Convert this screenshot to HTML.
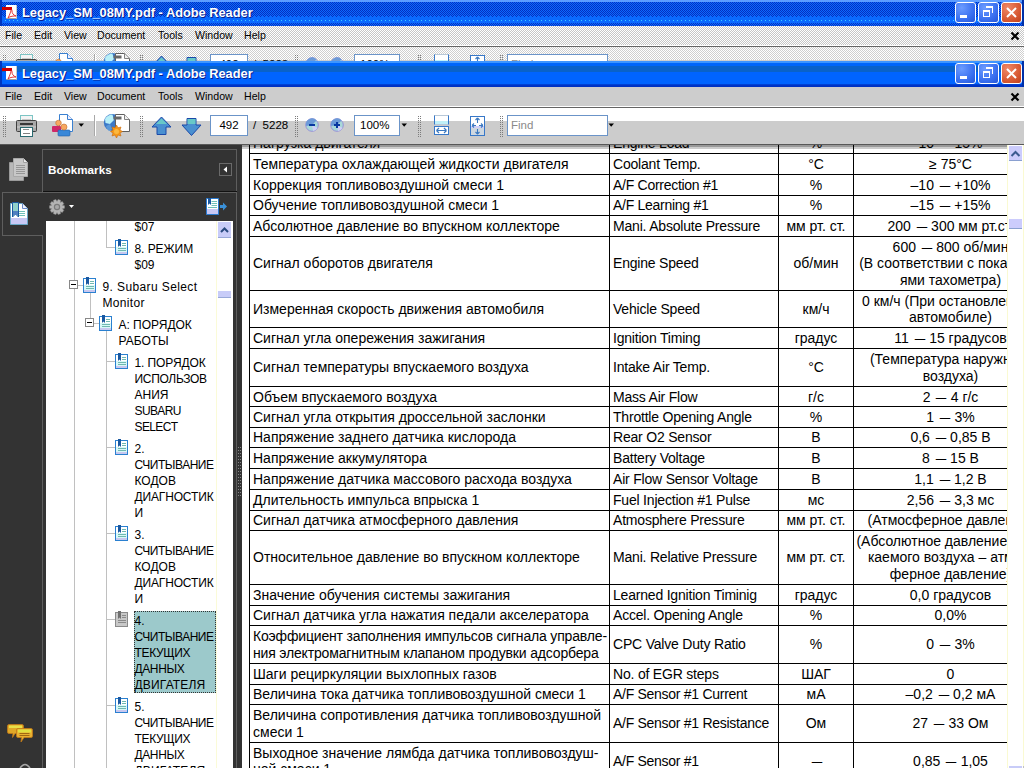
<!DOCTYPE html><html><head><meta charset="utf-8"><style>
*{margin:0;padding:0;box-sizing:border-box}
html,body{width:1024px;height:768px;overflow:hidden;background:#333;font-family:"Liberation Sans",sans-serif}
.abs{position:absolute}
.dith{background-image:repeating-conic-gradient(var(--c1) 0 25%, var(--c2) 0 50%);background-size:2px 2px}
.tb{font-weight:bold;color:#fff;font-size:12.8px;text-shadow:1px 1px 0 #0a1f8c}
.menu span{position:absolute;top:0;font-size:10.6px;color:#000}
.cell{position:absolute;display:flex;align-items:center;font-size:14px;line-height:16.5px;color:#000;white-space:nowrap;overflow:hidden}
.c1{justify-content:flex-start}
.cc{justify-content:center;text-align:center}
.hl{position:absolute;height:1px;background:#000}
.vl{position:absolute;width:1px;background:#000}
.tree{position:absolute;font-size:12px;line-height:16px;color:#000;white-space:nowrap}
.d{display:inline-block;width:10.5px;margin-right:2px;transform:scaleX(1.35);transform-origin:0 0}
.gl{position:absolute;background:#c0c0c0}
</style></head><body><div class="abs" style="left:0;top:0;width:1024px;height:61px;overflow:hidden">
<div class="abs" style="left:0;top:0px;width:1024px;height:26px;background:linear-gradient(#3d95ff 0,#3d95ff 2px,#0066fa 2px,#0066fa 5px,#0a62c8 5px,#0a62c8 11px,#0064ff 11px,#0064ff 23px,#0050e0 23px,#0034c8 24px,#0030c0 26px)"></div>
<div class="abs" style="left:0;top:0px;width:2px;height:26px;background:#0036c0"></div>
<div class="abs" style="left:1022px;top:0px;width:2px;height:26px;background:#0030a8"></div>
<svg class="abs" style="left:0;top:0" width="1024" height="26" shape-rendering="crispEdges"><defs><pattern id="pd" width="2" height="2" patternUnits="userSpaceOnUse"><rect width="2" height="2" fill="#0a6aff"/><rect width="1" height="1" fill="#0630c0"/><rect x="1" y="1" width="1" height="1" fill="#0630c0"/></pattern><pattern id="ps" width="4" height="4" patternUnits="userSpaceOnUse"><rect width="4" height="4" fill="#0a6aff"/><rect width="1" height="1" fill="#0630c0"/></pattern><pattern id="pc" width="4" height="1" patternUnits="userSpaceOnUse"><rect width="4" height="1" fill="#0a6aff"/><rect x="1" width="1" height="1" fill="#40c8ff"/></pattern></defs><rect width="1024" height="2" fill="#5c9cff"/><rect y="2" width="1024" height="14" fill="url(#pd)"/><rect y="16" width="1024" height="7" fill="url(#ps)"/><rect y="20" width="1024" height="1" fill="url(#pc)"/><rect y="23" width="1024" height="3" fill="url(#pd)"/><rect width="2" height="26" fill="#0036c0"/><rect x="1022" width="2" height="26" fill="#0030a8"/></svg>
<div class="abs" style="left:6px;top:5px;width:11px;height:14px;background:#fff;border-right:1px solid #c8c8c8;border-bottom:1px solid #a0a0a0"></div>
<div class="abs" style="left:2px;top:7px;width:10px;height:3px;background:#d00000"></div>
<svg class="abs" style="left:6px;top:8px" width="11" height="11" viewBox="0 0 11 11"><path d="M2 10 C4 6 5 3 5 2 C5 1 6 1 6 3 C6 5 7 7 10 8 C8 8 4 8 2 10Z" fill="none" stroke="#e02020" stroke-width="0.9"/></svg>
<div class="abs tb" style="left:22px;top:5px;line-height:16px">Legacy_SM_08MY.pdf - Adobe Reader</div>
<div class="abs" style="left:955px;top:2px;width:21px;height:21px;border:1px solid #fff;border-radius:3px;background:radial-gradient(circle at 30% 25%, #6c9cff, #3a70f0 60%, #2456d8)"></div>
<div class="abs" style="left:978px;top:2px;width:21px;height:21px;border:1px solid #fff;border-radius:3px;background:radial-gradient(circle at 30% 25%, #6c9cff, #3a70f0 60%, #2456d8)"></div>
<div class="abs" style="left:1001px;top:2px;width:21px;height:21px;border:1px solid #fff;border-radius:3px;background:radial-gradient(circle at 30% 25%, #f08868, #d85a34 60%, #c0401c)"></div>
<div class="abs" style="left:960px;top:15px;width:7px;height:3px;background:#fff"></div>
<div class="abs" style="left:983px;top:10px;width:7px;height:7px;border:1px solid #fff;border-top-width:2px"></div>
<div class="abs" style="left:986px;top:6px;width:7px;height:7px;border:1px solid #fff;border-top-width:2px;border-left:none;border-bottom:none"></div>
<svg class="abs" style="left:1001px;top:2px" width="21" height="21" viewBox="0 0 21 21"><path d="M6 6L15 15M15 6L6 15" stroke="#fff" stroke-width="2"/></svg>
<div class="abs" style="left:0;top:26px;width:1024px;height:19px;background:#cdcdcd"></div>
<div class="abs" style="left:0;top:45px;width:1024px;height:1px;background:#fff"></div>
<div class="abs" style="left:0;top:46px;width:1024px;height:1px;background:#646464"></div>
<svg class="abs" style="left:0;top:26px" width="1024" height="19" shape-rendering="crispEdges"><defs><pattern id="pm" width="2" height="2" patternUnits="userSpaceOnUse"><rect width="2" height="2" fill="#c6c6c6"/><rect width="1" height="1" fill="#fff"/><rect x="1" y="1" width="1" height="1" fill="#fff"/></pattern></defs><rect width="1024" height="19" fill="url(#pm)"/></svg>
<div class="abs menu" style="left:0;top:29px;width:1024px;height:14px">
<span style="left:5px">File</span>
<span style="left:34px">Edit</span>
<span style="left:64px">View</span>
<span style="left:97px">Document</span>
<span style="left:158px">Tools</span>
<span style="left:195px">Window</span>
<span style="left:244px">Help</span>
</div>
<svg class="abs" style="left:1010px;top:31px" width="10" height="10" viewBox="0 0 10 10"><path d="M1.5 1.5L8.5 8.5M8.5 1.5L1.5 8.5" stroke="#000" stroke-width="2.2"/></svg>
<div class="abs" style="left:0;top:47px;width:1024px;height:13px;background:#fff"></div>
<div class="abs" style="left:0;top:60px;width:1024px;height:23px;background:#cccccc"></div>
<svg class="abs" style="left:0;top:47px" width="1024" height="14" shape-rendering="crispEdges"><defs><pattern id="pt" width="2" height="2" patternUnits="userSpaceOnUse"><rect x="1" y="0" width="1" height="1" fill="#cfcfcf"/><rect x="0" y="1" width="1" height="1" fill="#cfcfcf"/></pattern></defs><rect width="1024" height="14" fill="url(#pt)"/></svg>
<div class="abs" style="left:3px;top:55px;width:1px;height:1px;background:#7c7c7c"></div><div class="abs" style="left:5px;top:55px;width:1px;height:1px;background:#7c7c7c"></div><div class="abs" style="left:3px;top:57px;width:1px;height:1px;background:#7c7c7c"></div><div class="abs" style="left:5px;top:57px;width:1px;height:1px;background:#7c7c7c"></div><div class="abs" style="left:3px;top:59px;width:1px;height:1px;background:#7c7c7c"></div><div class="abs" style="left:5px;top:59px;width:1px;height:1px;background:#7c7c7c"></div><div class="abs" style="left:3px;top:61px;width:1px;height:1px;background:#7c7c7c"></div><div class="abs" style="left:5px;top:61px;width:1px;height:1px;background:#7c7c7c"></div><div class="abs" style="left:3px;top:63px;width:1px;height:1px;background:#7c7c7c"></div><div class="abs" style="left:5px;top:63px;width:1px;height:1px;background:#7c7c7c"></div><div class="abs" style="left:3px;top:65px;width:1px;height:1px;background:#7c7c7c"></div><div class="abs" style="left:5px;top:65px;width:1px;height:1px;background:#7c7c7c"></div><div class="abs" style="left:3px;top:67px;width:1px;height:1px;background:#7c7c7c"></div><div class="abs" style="left:5px;top:67px;width:1px;height:1px;background:#7c7c7c"></div><div class="abs" style="left:3px;top:69px;width:1px;height:1px;background:#7c7c7c"></div><div class="abs" style="left:5px;top:69px;width:1px;height:1px;background:#7c7c7c"></div><div class="abs" style="left:3px;top:71px;width:1px;height:1px;background:#7c7c7c"></div><div class="abs" style="left:5px;top:71px;width:1px;height:1px;background:#7c7c7c"></div><div class="abs" style="left:3px;top:73px;width:1px;height:1px;background:#7c7c7c"></div><div class="abs" style="left:5px;top:73px;width:1px;height:1px;background:#7c7c7c"></div><div class="abs" style="left:3px;top:75px;width:1px;height:1px;background:#7c7c7c"></div><div class="abs" style="left:5px;top:75px;width:1px;height:1px;background:#7c7c7c"></div>
<div class="abs" style="left:140px;top:55px;width:1px;height:1px;background:#7c7c7c"></div><div class="abs" style="left:142px;top:55px;width:1px;height:1px;background:#7c7c7c"></div><div class="abs" style="left:140px;top:57px;width:1px;height:1px;background:#7c7c7c"></div><div class="abs" style="left:142px;top:57px;width:1px;height:1px;background:#7c7c7c"></div><div class="abs" style="left:140px;top:59px;width:1px;height:1px;background:#7c7c7c"></div><div class="abs" style="left:142px;top:59px;width:1px;height:1px;background:#7c7c7c"></div><div class="abs" style="left:140px;top:61px;width:1px;height:1px;background:#7c7c7c"></div><div class="abs" style="left:142px;top:61px;width:1px;height:1px;background:#7c7c7c"></div><div class="abs" style="left:140px;top:63px;width:1px;height:1px;background:#7c7c7c"></div><div class="abs" style="left:142px;top:63px;width:1px;height:1px;background:#7c7c7c"></div><div class="abs" style="left:140px;top:65px;width:1px;height:1px;background:#7c7c7c"></div><div class="abs" style="left:142px;top:65px;width:1px;height:1px;background:#7c7c7c"></div><div class="abs" style="left:140px;top:67px;width:1px;height:1px;background:#7c7c7c"></div><div class="abs" style="left:142px;top:67px;width:1px;height:1px;background:#7c7c7c"></div><div class="abs" style="left:140px;top:69px;width:1px;height:1px;background:#7c7c7c"></div><div class="abs" style="left:142px;top:69px;width:1px;height:1px;background:#7c7c7c"></div><div class="abs" style="left:140px;top:71px;width:1px;height:1px;background:#7c7c7c"></div><div class="abs" style="left:142px;top:71px;width:1px;height:1px;background:#7c7c7c"></div><div class="abs" style="left:140px;top:73px;width:1px;height:1px;background:#7c7c7c"></div><div class="abs" style="left:142px;top:73px;width:1px;height:1px;background:#7c7c7c"></div><div class="abs" style="left:140px;top:75px;width:1px;height:1px;background:#7c7c7c"></div><div class="abs" style="left:142px;top:75px;width:1px;height:1px;background:#7c7c7c"></div>
<div class="abs" style="left:295px;top:55px;width:1px;height:1px;background:#7c7c7c"></div><div class="abs" style="left:297px;top:55px;width:1px;height:1px;background:#7c7c7c"></div><div class="abs" style="left:295px;top:57px;width:1px;height:1px;background:#7c7c7c"></div><div class="abs" style="left:297px;top:57px;width:1px;height:1px;background:#7c7c7c"></div><div class="abs" style="left:295px;top:59px;width:1px;height:1px;background:#7c7c7c"></div><div class="abs" style="left:297px;top:59px;width:1px;height:1px;background:#7c7c7c"></div><div class="abs" style="left:295px;top:61px;width:1px;height:1px;background:#7c7c7c"></div><div class="abs" style="left:297px;top:61px;width:1px;height:1px;background:#7c7c7c"></div><div class="abs" style="left:295px;top:63px;width:1px;height:1px;background:#7c7c7c"></div><div class="abs" style="left:297px;top:63px;width:1px;height:1px;background:#7c7c7c"></div><div class="abs" style="left:295px;top:65px;width:1px;height:1px;background:#7c7c7c"></div><div class="abs" style="left:297px;top:65px;width:1px;height:1px;background:#7c7c7c"></div><div class="abs" style="left:295px;top:67px;width:1px;height:1px;background:#7c7c7c"></div><div class="abs" style="left:297px;top:67px;width:1px;height:1px;background:#7c7c7c"></div><div class="abs" style="left:295px;top:69px;width:1px;height:1px;background:#7c7c7c"></div><div class="abs" style="left:297px;top:69px;width:1px;height:1px;background:#7c7c7c"></div><div class="abs" style="left:295px;top:71px;width:1px;height:1px;background:#7c7c7c"></div><div class="abs" style="left:297px;top:71px;width:1px;height:1px;background:#7c7c7c"></div><div class="abs" style="left:295px;top:73px;width:1px;height:1px;background:#7c7c7c"></div><div class="abs" style="left:297px;top:73px;width:1px;height:1px;background:#7c7c7c"></div><div class="abs" style="left:295px;top:75px;width:1px;height:1px;background:#7c7c7c"></div><div class="abs" style="left:297px;top:75px;width:1px;height:1px;background:#7c7c7c"></div>
<div class="abs" style="left:418px;top:55px;width:1px;height:1px;background:#7c7c7c"></div><div class="abs" style="left:420px;top:55px;width:1px;height:1px;background:#7c7c7c"></div><div class="abs" style="left:418px;top:57px;width:1px;height:1px;background:#7c7c7c"></div><div class="abs" style="left:420px;top:57px;width:1px;height:1px;background:#7c7c7c"></div><div class="abs" style="left:418px;top:59px;width:1px;height:1px;background:#7c7c7c"></div><div class="abs" style="left:420px;top:59px;width:1px;height:1px;background:#7c7c7c"></div><div class="abs" style="left:418px;top:61px;width:1px;height:1px;background:#7c7c7c"></div><div class="abs" style="left:420px;top:61px;width:1px;height:1px;background:#7c7c7c"></div><div class="abs" style="left:418px;top:63px;width:1px;height:1px;background:#7c7c7c"></div><div class="abs" style="left:420px;top:63px;width:1px;height:1px;background:#7c7c7c"></div><div class="abs" style="left:418px;top:65px;width:1px;height:1px;background:#7c7c7c"></div><div class="abs" style="left:420px;top:65px;width:1px;height:1px;background:#7c7c7c"></div><div class="abs" style="left:418px;top:67px;width:1px;height:1px;background:#7c7c7c"></div><div class="abs" style="left:420px;top:67px;width:1px;height:1px;background:#7c7c7c"></div><div class="abs" style="left:418px;top:69px;width:1px;height:1px;background:#7c7c7c"></div><div class="abs" style="left:420px;top:69px;width:1px;height:1px;background:#7c7c7c"></div><div class="abs" style="left:418px;top:71px;width:1px;height:1px;background:#7c7c7c"></div><div class="abs" style="left:420px;top:71px;width:1px;height:1px;background:#7c7c7c"></div><div class="abs" style="left:418px;top:73px;width:1px;height:1px;background:#7c7c7c"></div><div class="abs" style="left:420px;top:73px;width:1px;height:1px;background:#7c7c7c"></div><div class="abs" style="left:418px;top:75px;width:1px;height:1px;background:#7c7c7c"></div><div class="abs" style="left:420px;top:75px;width:1px;height:1px;background:#7c7c7c"></div>
<div class="abs" style="left:500px;top:55px;width:1px;height:1px;background:#7c7c7c"></div><div class="abs" style="left:502px;top:55px;width:1px;height:1px;background:#7c7c7c"></div><div class="abs" style="left:500px;top:57px;width:1px;height:1px;background:#7c7c7c"></div><div class="abs" style="left:502px;top:57px;width:1px;height:1px;background:#7c7c7c"></div><div class="abs" style="left:500px;top:59px;width:1px;height:1px;background:#7c7c7c"></div><div class="abs" style="left:502px;top:59px;width:1px;height:1px;background:#7c7c7c"></div><div class="abs" style="left:500px;top:61px;width:1px;height:1px;background:#7c7c7c"></div><div class="abs" style="left:502px;top:61px;width:1px;height:1px;background:#7c7c7c"></div><div class="abs" style="left:500px;top:63px;width:1px;height:1px;background:#7c7c7c"></div><div class="abs" style="left:502px;top:63px;width:1px;height:1px;background:#7c7c7c"></div><div class="abs" style="left:500px;top:65px;width:1px;height:1px;background:#7c7c7c"></div><div class="abs" style="left:502px;top:65px;width:1px;height:1px;background:#7c7c7c"></div><div class="abs" style="left:500px;top:67px;width:1px;height:1px;background:#7c7c7c"></div><div class="abs" style="left:502px;top:67px;width:1px;height:1px;background:#7c7c7c"></div><div class="abs" style="left:500px;top:69px;width:1px;height:1px;background:#7c7c7c"></div><div class="abs" style="left:502px;top:69px;width:1px;height:1px;background:#7c7c7c"></div><div class="abs" style="left:500px;top:71px;width:1px;height:1px;background:#7c7c7c"></div><div class="abs" style="left:502px;top:71px;width:1px;height:1px;background:#7c7c7c"></div><div class="abs" style="left:500px;top:73px;width:1px;height:1px;background:#7c7c7c"></div><div class="abs" style="left:502px;top:73px;width:1px;height:1px;background:#7c7c7c"></div><div class="abs" style="left:500px;top:75px;width:1px;height:1px;background:#7c7c7c"></div><div class="abs" style="left:502px;top:75px;width:1px;height:1px;background:#7c7c7c"></div>
<svg class="abs" style="left:14px;top:51px" width="26" height="27" viewBox="0 0 26 27"><rect x="6.5" y="3.5" width="12" height="7" fill="#f4f4f4" stroke="#7cc4c4"/><rect x="8" y="7" width="9" height="1" fill="#c8c8c8"/><rect x="2.5" y="8.5" width="20" height="11" rx="1" fill="#a8a8a8" stroke="#404040"/><rect x="6" y="11" width="13" height="2" fill="#383838"/><rect x="3" y="14" width="19" height="2" fill="#bdbdbd"/><rect x="6.5" y="15.5" width="12" height="9" fill="#ffffff" stroke="#2a6a70"/><rect x="9" y="17" width="6" height="1" fill="#909090"/><rect x="9" y="21" width="7" height="1" fill="#808080"/></svg>
<svg class="abs" style="left:50px;top:51px" width="26" height="27" viewBox="0 0 26 27"><path d="M9.5 2.5H17.5L22.5 7.5V19.5H9.5Z" fill="#fff" stroke="#3a80d0"/><path d="M17.5 2.5V7.5H22.5" fill="#eef" stroke="#3a80d0"/><rect x="2" y="14" width="9" height="6" rx="1" fill="#d02868"/><circle cx="8.5" cy="11" r="2.8" fill="#f8a860" stroke="#c07030" stroke-width=".6"/><rect x="8" y="18" width="12" height="6" rx="1" fill="#3a88d8" stroke="#2060a8" stroke-width=".6"/><circle cx="14" cy="15" r="3" fill="#f8a860" stroke="#c07030" stroke-width=".6"/></svg>
<svg class="abs" style="left:78px;top:62px" width="7" height="5"><path d="M0.5 0.5H6L3.2 3.8Z" fill="#000"/></svg>
<div class="abs" style="left:94px;top:54px;width:1px;height:21px;background:#a8a8a8"></div><div class="abs" style="left:95px;top:54px;width:1px;height:21px;background:#fff"></div>
<svg class="abs" style="left:102px;top:51px" width="30" height="28" viewBox="0 0 30 28"><circle cx="10.3" cy="10.5" r="8.5" fill="#3a78c8"/><path d="M3 7C4.5 4 7.5 2.5 10.5 2.5L12 8L8 12L3.5 11Z" fill="#b8f0f8"/><path d="M4 14L8 12L10 17L7 19C5.5 18 4.5 16 4 14Z" fill="#5a98d8"/><path d="M13.5 2.5H22.5L27.5 7.5V19.5H13.5Z" fill="#fff" stroke="#606060"/><path d="M22.5 2.5V7.5H27.5" fill="#f0f0f0" stroke="#808080"/><rect x="11.5" y="4.5" width="8" height="3" fill="#686868"/><path d="M14.5 13L16 15.8L19 15L18 18L20.5 19.5L18 21L19 24L16 23L14.5 26L13 23L10 24L11 21L8.5 19.5L11 18L10 15L13 15.8Z" fill="#f59818" stroke="#c86a10" stroke-width=".6"/><circle cx="14.5" cy="19.5" r="2.5" fill="#fbb840"/></svg>
<svg class="abs" style="left:151px;top:55px" width="22" height="21" viewBox="0 0 22 21"><path d="M10.5 1L20 11H15V18.5H6V11H1Z" fill="#4a90d0" stroke="#1a48a8" stroke-linejoin="round"/><path d="M10.5 2.5L16 8H5Z" fill="#68c8c8"/></svg>
<svg class="abs" style="left:181px;top:56px" width="22" height="21" viewBox="0 0 22 21"><path d="M6 1.5H15V8H20L10.5 18.5L1 8H6Z" fill="#4a90d0" stroke="#1a48a8" stroke-linejoin="round"/><rect x="6.5" y="2" width="8" height="5" fill="#68c8c8"/></svg>
<div class="abs" style="left:210px;top:54px;width:38px;height:21px;background:#fff;border:1px solid #6b94c8;font-size:11.5px;line-height:19px;text-align:center;color:#000">492</div>
<div class="abs" style="left:253px;top:55px;font-size:11.5px;line-height:19px;color:#000">/&nbsp;&nbsp;5228</div>
<svg class="abs" style="left:304px;top:56px" width="16" height="16" viewBox="0 0 16 16"><circle cx="8" cy="8" r="6.3" fill="#a8d8d8" stroke="#9890d8" stroke-width="1"/><path d="M2.2 9A6 6 0 0 1 12.5 3.5L8 8Z" fill="#6c9ad8"/><path d="M8 8L13.5 11A6 6 0 0 1 9 14Z" fill="#d0d0f8"/><rect x="5" y="7" width="6" height="2" fill="#0838a0"/></svg>
<svg class="abs" style="left:329px;top:56px" width="16" height="16" viewBox="0 0 16 16"><circle cx="8" cy="8" r="6.3" fill="#a8d8d8" stroke="#9890d8" stroke-width="1"/><path d="M2.2 9A6 6 0 0 1 12.5 3.5L8 8Z" fill="#6c9ad8"/><path d="M8 8L13.5 11A6 6 0 0 1 9 14Z" fill="#d0d0f8"/><rect x="5" y="7" width="6" height="2" fill="#0838a0"/><rect x="7" y="5" width="2" height="6" fill="#0838a0"/></svg>
<div class="abs" style="left:354px;top:54px;width:46px;height:21px;background:#fff;border:1px solid #6b94c8;font-size:11.5px;line-height:19px;padding-left:5px;color:#000">100%</div>
<svg class="abs" style="left:401px;top:62px" width="7" height="5"><path d="M0.5 0.5H6L3.2 3.8Z" fill="#000"/></svg>
<svg class="abs" style="left:433px;top:53px" width="18" height="23" viewBox="0 0 18 23"><rect x="1.5" y="1.5" width="14" height="9" fill="#fff" stroke="#b8c8d8"/><rect x="2" y="7" width="13" height="3" fill="#c0f0f8"/><path d="M1.5 1.5V10.5M15.5 1.5V10.5" stroke="#3878c8"/><rect x="1.5" y="12.5" width="14" height="8" fill="#fff" stroke="#3878c8"/><path d="M3.5 16.5H13.5M3.5 16.5L6 14M3.5 16.5L6 19M13.5 16.5L11 14M13.5 16.5L11 19" stroke="#3a78c0" stroke-width="1.2" fill="none"/></svg>
<svg class="abs" style="left:469px;top:54px" width="18" height="22" viewBox="0 0 18 22"><rect x="1.5" y="1.5" width="14" height="19" fill="#fff" stroke="#3878c8"/><rect x="2" y="11" width="13" height="2" fill="#d0d0f8"/><rect x="2" y="13" width="13" height="7" fill="#cfd8e0"/><path d="M8.5 3V8M8.5 3L6.5 5M8.5 3L10.5 5M8.5 19V14M8.5 19L6.5 17M8.5 19L10.5 17M3 10.5H7M3 10.5L5 8.5M3 10.5L5 12.5M14 10.5H10M14 10.5L12 8.5M14 10.5L12 12.5" stroke="#3a78c0" stroke-width="1.1" fill="none"/></svg>
<div class="abs" style="left:507px;top:54px;width:101px;height:21px;background:#fff;border:1px solid #6b94c8;font-size:11.5px;line-height:19px;padding-left:3px;color:#8a8a8a">Find</div>
<svg class="abs" style="left:608px;top:62px" width="7" height="5"><path d="M0.5 0.5H6L3.2 3.8Z" fill="#000"/></svg>
</div>
<div class="abs" style="left:0;top:61px;width:1024px;height:26px;background:linear-gradient(#3d95ff 0,#3d95ff 2px,#0066fa 2px,#0066fa 5px,#0a62c8 5px,#0a62c8 11px,#0064ff 11px,#0064ff 23px,#0050e0 23px,#0034c8 24px,#0030c0 26px)"></div>
<div class="abs" style="left:0;top:61px;width:2px;height:26px;background:#0036c0"></div>
<div class="abs" style="left:1022px;top:61px;width:2px;height:26px;background:#0030a8"></div>
<div class="abs" style="left:6px;top:66px;width:11px;height:14px;background:#fff;border-right:1px solid #c8c8c8;border-bottom:1px solid #a0a0a0"></div>
<div class="abs" style="left:2px;top:68px;width:10px;height:3px;background:#d00000"></div>
<svg class="abs" style="left:6px;top:69px" width="11" height="11" viewBox="0 0 11 11"><path d="M2 10 C4 6 5 3 5 2 C5 1 6 1 6 3 C6 5 7 7 10 8 C8 8 4 8 2 10Z" fill="none" stroke="#e02020" stroke-width="0.9"/></svg>
<div class="abs tb" style="left:22px;top:66px;line-height:16px">Legacy_SM_08MY.pdf - Adobe Reader</div>
<div class="abs" style="left:955px;top:63px;width:21px;height:21px;border:1px solid #fff;border-radius:3px;background:radial-gradient(circle at 30% 25%, #6c9cff, #3a70f0 60%, #2456d8)"></div>
<div class="abs" style="left:978px;top:63px;width:21px;height:21px;border:1px solid #fff;border-radius:3px;background:radial-gradient(circle at 30% 25%, #6c9cff, #3a70f0 60%, #2456d8)"></div>
<div class="abs" style="left:1001px;top:63px;width:21px;height:21px;border:1px solid #fff;border-radius:3px;background:radial-gradient(circle at 30% 25%, #f08868, #d85a34 60%, #c0401c)"></div>
<div class="abs" style="left:960px;top:76px;width:7px;height:3px;background:#fff"></div>
<div class="abs" style="left:983px;top:71px;width:7px;height:7px;border:1px solid #fff;border-top-width:2px"></div>
<div class="abs" style="left:986px;top:67px;width:7px;height:7px;border:1px solid #fff;border-top-width:2px;border-left:none;border-bottom:none"></div>
<svg class="abs" style="left:1001px;top:63px" width="21" height="21" viewBox="0 0 21 21"><path d="M6 6L15 15M15 6L6 15" stroke="#fff" stroke-width="2"/></svg>
<div class="abs" style="left:0;top:87px;width:1024px;height:19px;background:#cdcdcd"></div>
<div class="abs" style="left:0;top:106px;width:1024px;height:1px;background:#fff"></div>
<div class="abs" style="left:0;top:107px;width:1024px;height:1px;background:#646464"></div>
<div class="abs menu" style="left:0;top:90px;width:1024px;height:14px">
<span style="left:5px">File</span>
<span style="left:34px">Edit</span>
<span style="left:64px">View</span>
<span style="left:97px">Document</span>
<span style="left:158px">Tools</span>
<span style="left:195px">Window</span>
<span style="left:244px">Help</span>
</div>
<svg class="abs" style="left:1010px;top:92px" width="10" height="10" viewBox="0 0 10 10"><path d="M1.5 1.5L8.5 8.5M8.5 1.5L1.5 8.5" stroke="#000" stroke-width="2.2"/></svg>
<div class="abs" style="left:0;top:108px;width:1024px;height:13px;background:#fff"></div>
<div class="abs" style="left:0;top:121px;width:1024px;height:23px;background:#cccccc"></div>
<div class="abs" style="left:3px;top:116px;width:1px;height:1px;background:#7c7c7c"></div><div class="abs" style="left:5px;top:116px;width:1px;height:1px;background:#7c7c7c"></div><div class="abs" style="left:3px;top:118px;width:1px;height:1px;background:#7c7c7c"></div><div class="abs" style="left:5px;top:118px;width:1px;height:1px;background:#7c7c7c"></div><div class="abs" style="left:3px;top:120px;width:1px;height:1px;background:#7c7c7c"></div><div class="abs" style="left:5px;top:120px;width:1px;height:1px;background:#7c7c7c"></div><div class="abs" style="left:3px;top:122px;width:1px;height:1px;background:#7c7c7c"></div><div class="abs" style="left:5px;top:122px;width:1px;height:1px;background:#7c7c7c"></div><div class="abs" style="left:3px;top:124px;width:1px;height:1px;background:#7c7c7c"></div><div class="abs" style="left:5px;top:124px;width:1px;height:1px;background:#7c7c7c"></div><div class="abs" style="left:3px;top:126px;width:1px;height:1px;background:#7c7c7c"></div><div class="abs" style="left:5px;top:126px;width:1px;height:1px;background:#7c7c7c"></div><div class="abs" style="left:3px;top:128px;width:1px;height:1px;background:#7c7c7c"></div><div class="abs" style="left:5px;top:128px;width:1px;height:1px;background:#7c7c7c"></div><div class="abs" style="left:3px;top:130px;width:1px;height:1px;background:#7c7c7c"></div><div class="abs" style="left:5px;top:130px;width:1px;height:1px;background:#7c7c7c"></div><div class="abs" style="left:3px;top:132px;width:1px;height:1px;background:#7c7c7c"></div><div class="abs" style="left:5px;top:132px;width:1px;height:1px;background:#7c7c7c"></div><div class="abs" style="left:3px;top:134px;width:1px;height:1px;background:#7c7c7c"></div><div class="abs" style="left:5px;top:134px;width:1px;height:1px;background:#7c7c7c"></div><div class="abs" style="left:3px;top:136px;width:1px;height:1px;background:#7c7c7c"></div><div class="abs" style="left:5px;top:136px;width:1px;height:1px;background:#7c7c7c"></div>
<div class="abs" style="left:140px;top:116px;width:1px;height:1px;background:#7c7c7c"></div><div class="abs" style="left:142px;top:116px;width:1px;height:1px;background:#7c7c7c"></div><div class="abs" style="left:140px;top:118px;width:1px;height:1px;background:#7c7c7c"></div><div class="abs" style="left:142px;top:118px;width:1px;height:1px;background:#7c7c7c"></div><div class="abs" style="left:140px;top:120px;width:1px;height:1px;background:#7c7c7c"></div><div class="abs" style="left:142px;top:120px;width:1px;height:1px;background:#7c7c7c"></div><div class="abs" style="left:140px;top:122px;width:1px;height:1px;background:#7c7c7c"></div><div class="abs" style="left:142px;top:122px;width:1px;height:1px;background:#7c7c7c"></div><div class="abs" style="left:140px;top:124px;width:1px;height:1px;background:#7c7c7c"></div><div class="abs" style="left:142px;top:124px;width:1px;height:1px;background:#7c7c7c"></div><div class="abs" style="left:140px;top:126px;width:1px;height:1px;background:#7c7c7c"></div><div class="abs" style="left:142px;top:126px;width:1px;height:1px;background:#7c7c7c"></div><div class="abs" style="left:140px;top:128px;width:1px;height:1px;background:#7c7c7c"></div><div class="abs" style="left:142px;top:128px;width:1px;height:1px;background:#7c7c7c"></div><div class="abs" style="left:140px;top:130px;width:1px;height:1px;background:#7c7c7c"></div><div class="abs" style="left:142px;top:130px;width:1px;height:1px;background:#7c7c7c"></div><div class="abs" style="left:140px;top:132px;width:1px;height:1px;background:#7c7c7c"></div><div class="abs" style="left:142px;top:132px;width:1px;height:1px;background:#7c7c7c"></div><div class="abs" style="left:140px;top:134px;width:1px;height:1px;background:#7c7c7c"></div><div class="abs" style="left:142px;top:134px;width:1px;height:1px;background:#7c7c7c"></div><div class="abs" style="left:140px;top:136px;width:1px;height:1px;background:#7c7c7c"></div><div class="abs" style="left:142px;top:136px;width:1px;height:1px;background:#7c7c7c"></div>
<div class="abs" style="left:295px;top:116px;width:1px;height:1px;background:#7c7c7c"></div><div class="abs" style="left:297px;top:116px;width:1px;height:1px;background:#7c7c7c"></div><div class="abs" style="left:295px;top:118px;width:1px;height:1px;background:#7c7c7c"></div><div class="abs" style="left:297px;top:118px;width:1px;height:1px;background:#7c7c7c"></div><div class="abs" style="left:295px;top:120px;width:1px;height:1px;background:#7c7c7c"></div><div class="abs" style="left:297px;top:120px;width:1px;height:1px;background:#7c7c7c"></div><div class="abs" style="left:295px;top:122px;width:1px;height:1px;background:#7c7c7c"></div><div class="abs" style="left:297px;top:122px;width:1px;height:1px;background:#7c7c7c"></div><div class="abs" style="left:295px;top:124px;width:1px;height:1px;background:#7c7c7c"></div><div class="abs" style="left:297px;top:124px;width:1px;height:1px;background:#7c7c7c"></div><div class="abs" style="left:295px;top:126px;width:1px;height:1px;background:#7c7c7c"></div><div class="abs" style="left:297px;top:126px;width:1px;height:1px;background:#7c7c7c"></div><div class="abs" style="left:295px;top:128px;width:1px;height:1px;background:#7c7c7c"></div><div class="abs" style="left:297px;top:128px;width:1px;height:1px;background:#7c7c7c"></div><div class="abs" style="left:295px;top:130px;width:1px;height:1px;background:#7c7c7c"></div><div class="abs" style="left:297px;top:130px;width:1px;height:1px;background:#7c7c7c"></div><div class="abs" style="left:295px;top:132px;width:1px;height:1px;background:#7c7c7c"></div><div class="abs" style="left:297px;top:132px;width:1px;height:1px;background:#7c7c7c"></div><div class="abs" style="left:295px;top:134px;width:1px;height:1px;background:#7c7c7c"></div><div class="abs" style="left:297px;top:134px;width:1px;height:1px;background:#7c7c7c"></div><div class="abs" style="left:295px;top:136px;width:1px;height:1px;background:#7c7c7c"></div><div class="abs" style="left:297px;top:136px;width:1px;height:1px;background:#7c7c7c"></div>
<div class="abs" style="left:418px;top:116px;width:1px;height:1px;background:#7c7c7c"></div><div class="abs" style="left:420px;top:116px;width:1px;height:1px;background:#7c7c7c"></div><div class="abs" style="left:418px;top:118px;width:1px;height:1px;background:#7c7c7c"></div><div class="abs" style="left:420px;top:118px;width:1px;height:1px;background:#7c7c7c"></div><div class="abs" style="left:418px;top:120px;width:1px;height:1px;background:#7c7c7c"></div><div class="abs" style="left:420px;top:120px;width:1px;height:1px;background:#7c7c7c"></div><div class="abs" style="left:418px;top:122px;width:1px;height:1px;background:#7c7c7c"></div><div class="abs" style="left:420px;top:122px;width:1px;height:1px;background:#7c7c7c"></div><div class="abs" style="left:418px;top:124px;width:1px;height:1px;background:#7c7c7c"></div><div class="abs" style="left:420px;top:124px;width:1px;height:1px;background:#7c7c7c"></div><div class="abs" style="left:418px;top:126px;width:1px;height:1px;background:#7c7c7c"></div><div class="abs" style="left:420px;top:126px;width:1px;height:1px;background:#7c7c7c"></div><div class="abs" style="left:418px;top:128px;width:1px;height:1px;background:#7c7c7c"></div><div class="abs" style="left:420px;top:128px;width:1px;height:1px;background:#7c7c7c"></div><div class="abs" style="left:418px;top:130px;width:1px;height:1px;background:#7c7c7c"></div><div class="abs" style="left:420px;top:130px;width:1px;height:1px;background:#7c7c7c"></div><div class="abs" style="left:418px;top:132px;width:1px;height:1px;background:#7c7c7c"></div><div class="abs" style="left:420px;top:132px;width:1px;height:1px;background:#7c7c7c"></div><div class="abs" style="left:418px;top:134px;width:1px;height:1px;background:#7c7c7c"></div><div class="abs" style="left:420px;top:134px;width:1px;height:1px;background:#7c7c7c"></div><div class="abs" style="left:418px;top:136px;width:1px;height:1px;background:#7c7c7c"></div><div class="abs" style="left:420px;top:136px;width:1px;height:1px;background:#7c7c7c"></div>
<div class="abs" style="left:500px;top:116px;width:1px;height:1px;background:#7c7c7c"></div><div class="abs" style="left:502px;top:116px;width:1px;height:1px;background:#7c7c7c"></div><div class="abs" style="left:500px;top:118px;width:1px;height:1px;background:#7c7c7c"></div><div class="abs" style="left:502px;top:118px;width:1px;height:1px;background:#7c7c7c"></div><div class="abs" style="left:500px;top:120px;width:1px;height:1px;background:#7c7c7c"></div><div class="abs" style="left:502px;top:120px;width:1px;height:1px;background:#7c7c7c"></div><div class="abs" style="left:500px;top:122px;width:1px;height:1px;background:#7c7c7c"></div><div class="abs" style="left:502px;top:122px;width:1px;height:1px;background:#7c7c7c"></div><div class="abs" style="left:500px;top:124px;width:1px;height:1px;background:#7c7c7c"></div><div class="abs" style="left:502px;top:124px;width:1px;height:1px;background:#7c7c7c"></div><div class="abs" style="left:500px;top:126px;width:1px;height:1px;background:#7c7c7c"></div><div class="abs" style="left:502px;top:126px;width:1px;height:1px;background:#7c7c7c"></div><div class="abs" style="left:500px;top:128px;width:1px;height:1px;background:#7c7c7c"></div><div class="abs" style="left:502px;top:128px;width:1px;height:1px;background:#7c7c7c"></div><div class="abs" style="left:500px;top:130px;width:1px;height:1px;background:#7c7c7c"></div><div class="abs" style="left:502px;top:130px;width:1px;height:1px;background:#7c7c7c"></div><div class="abs" style="left:500px;top:132px;width:1px;height:1px;background:#7c7c7c"></div><div class="abs" style="left:502px;top:132px;width:1px;height:1px;background:#7c7c7c"></div><div class="abs" style="left:500px;top:134px;width:1px;height:1px;background:#7c7c7c"></div><div class="abs" style="left:502px;top:134px;width:1px;height:1px;background:#7c7c7c"></div><div class="abs" style="left:500px;top:136px;width:1px;height:1px;background:#7c7c7c"></div><div class="abs" style="left:502px;top:136px;width:1px;height:1px;background:#7c7c7c"></div>
<svg class="abs" style="left:14px;top:112px" width="26" height="27" viewBox="0 0 26 27"><rect x="6.5" y="3.5" width="12" height="7" fill="#f4f4f4" stroke="#7cc4c4"/><rect x="8" y="7" width="9" height="1" fill="#c8c8c8"/><rect x="2.5" y="8.5" width="20" height="11" rx="1" fill="#a8a8a8" stroke="#404040"/><rect x="6" y="11" width="13" height="2" fill="#383838"/><rect x="3" y="14" width="19" height="2" fill="#bdbdbd"/><rect x="6.5" y="15.5" width="12" height="9" fill="#ffffff" stroke="#2a6a70"/><rect x="9" y="17" width="6" height="1" fill="#909090"/><rect x="9" y="21" width="7" height="1" fill="#808080"/></svg>
<svg class="abs" style="left:50px;top:112px" width="26" height="27" viewBox="0 0 26 27"><path d="M9.5 2.5H17.5L22.5 7.5V19.5H9.5Z" fill="#fff" stroke="#3a80d0"/><path d="M17.5 2.5V7.5H22.5" fill="#eef" stroke="#3a80d0"/><rect x="2" y="14" width="9" height="6" rx="1" fill="#d02868"/><circle cx="8.5" cy="11" r="2.8" fill="#f8a860" stroke="#c07030" stroke-width=".6"/><rect x="8" y="18" width="12" height="6" rx="1" fill="#3a88d8" stroke="#2060a8" stroke-width=".6"/><circle cx="14" cy="15" r="3" fill="#f8a860" stroke="#c07030" stroke-width=".6"/></svg>
<svg class="abs" style="left:78px;top:123px" width="7" height="5"><path d="M0.5 0.5H6L3.2 3.8Z" fill="#000"/></svg>
<div class="abs" style="left:94px;top:115px;width:1px;height:21px;background:#a8a8a8"></div><div class="abs" style="left:95px;top:115px;width:1px;height:21px;background:#fff"></div>
<svg class="abs" style="left:102px;top:112px" width="30" height="28" viewBox="0 0 30 28"><circle cx="10.3" cy="10.5" r="8.5" fill="#3a78c8"/><path d="M3 7C4.5 4 7.5 2.5 10.5 2.5L12 8L8 12L3.5 11Z" fill="#b8f0f8"/><path d="M4 14L8 12L10 17L7 19C5.5 18 4.5 16 4 14Z" fill="#5a98d8"/><path d="M13.5 2.5H22.5L27.5 7.5V19.5H13.5Z" fill="#fff" stroke="#606060"/><path d="M22.5 2.5V7.5H27.5" fill="#f0f0f0" stroke="#808080"/><rect x="11.5" y="4.5" width="8" height="3" fill="#686868"/><path d="M14.5 13L16 15.8L19 15L18 18L20.5 19.5L18 21L19 24L16 23L14.5 26L13 23L10 24L11 21L8.5 19.5L11 18L10 15L13 15.8Z" fill="#f59818" stroke="#c86a10" stroke-width=".6"/><circle cx="14.5" cy="19.5" r="2.5" fill="#fbb840"/></svg>
<svg class="abs" style="left:151px;top:116px" width="22" height="21" viewBox="0 0 22 21"><path d="M10.5 1L20 11H15V18.5H6V11H1Z" fill="#4a90d0" stroke="#1a48a8" stroke-linejoin="round"/><path d="M10.5 2.5L16 8H5Z" fill="#68c8c8"/></svg>
<svg class="abs" style="left:181px;top:117px" width="22" height="21" viewBox="0 0 22 21"><path d="M6 1.5H15V8H20L10.5 18.5L1 8H6Z" fill="#4a90d0" stroke="#1a48a8" stroke-linejoin="round"/><rect x="6.5" y="2" width="8" height="5" fill="#68c8c8"/></svg>
<div class="abs" style="left:210px;top:115px;width:38px;height:21px;background:#fff;border:1px solid #6b94c8;font-size:11.5px;line-height:19px;text-align:center;color:#000">492</div>
<div class="abs" style="left:253px;top:116px;font-size:11.5px;line-height:19px;color:#000">/&nbsp;&nbsp;5228</div>
<svg class="abs" style="left:304px;top:117px" width="16" height="16" viewBox="0 0 16 16"><circle cx="8" cy="8" r="6.3" fill="#a8d8d8" stroke="#9890d8" stroke-width="1"/><path d="M2.2 9A6 6 0 0 1 12.5 3.5L8 8Z" fill="#6c9ad8"/><path d="M8 8L13.5 11A6 6 0 0 1 9 14Z" fill="#d0d0f8"/><rect x="5" y="7" width="6" height="2" fill="#0838a0"/></svg>
<svg class="abs" style="left:329px;top:117px" width="16" height="16" viewBox="0 0 16 16"><circle cx="8" cy="8" r="6.3" fill="#a8d8d8" stroke="#9890d8" stroke-width="1"/><path d="M2.2 9A6 6 0 0 1 12.5 3.5L8 8Z" fill="#6c9ad8"/><path d="M8 8L13.5 11A6 6 0 0 1 9 14Z" fill="#d0d0f8"/><rect x="5" y="7" width="6" height="2" fill="#0838a0"/><rect x="7" y="5" width="2" height="6" fill="#0838a0"/></svg>
<div class="abs" style="left:354px;top:115px;width:46px;height:21px;background:#fff;border:1px solid #6b94c8;font-size:11.5px;line-height:19px;padding-left:5px;color:#000">100%</div>
<svg class="abs" style="left:401px;top:123px" width="7" height="5"><path d="M0.5 0.5H6L3.2 3.8Z" fill="#000"/></svg>
<svg class="abs" style="left:433px;top:114px" width="18" height="23" viewBox="0 0 18 23"><rect x="1.5" y="1.5" width="14" height="9" fill="#fff" stroke="#b8c8d8"/><rect x="2" y="7" width="13" height="3" fill="#c0f0f8"/><path d="M1.5 1.5V10.5M15.5 1.5V10.5" stroke="#3878c8"/><rect x="1.5" y="12.5" width="14" height="8" fill="#fff" stroke="#3878c8"/><path d="M3.5 16.5H13.5M3.5 16.5L6 14M3.5 16.5L6 19M13.5 16.5L11 14M13.5 16.5L11 19" stroke="#3a78c0" stroke-width="1.2" fill="none"/></svg>
<svg class="abs" style="left:469px;top:115px" width="18" height="22" viewBox="0 0 18 22"><rect x="1.5" y="1.5" width="14" height="19" fill="#fff" stroke="#3878c8"/><rect x="2" y="11" width="13" height="2" fill="#d0d0f8"/><rect x="2" y="13" width="13" height="7" fill="#cfd8e0"/><path d="M8.5 3V8M8.5 3L6.5 5M8.5 3L10.5 5M8.5 19V14M8.5 19L6.5 17M8.5 19L10.5 17M3 10.5H7M3 10.5L5 8.5M3 10.5L5 12.5M14 10.5H10M14 10.5L12 8.5M14 10.5L12 12.5" stroke="#3a78c0" stroke-width="1.1" fill="none"/></svg>
<div class="abs" style="left:507px;top:115px;width:101px;height:21px;background:#fff;border:1px solid #6b94c8;font-size:11.5px;line-height:19px;padding-left:3px;color:#8a8a8a">Find</div>
<svg class="abs" style="left:608px;top:123px" width="7" height="5"><path d="M0.5 0.5H6L3.2 3.8Z" fill="#000"/></svg>
<div class="abs" style="left:0;top:144px;width:1024px;height:624px;background:#333"></div>
<div class="abs" style="left:242px;top:144px;width:782px;height:624px;background:#fff;overflow:hidden" id="pg">
<div class="cell c1" style="left:8px;top:-11.3px;width:359px;height:21.0px;padding-left:3px;"><div>Нагрузка двигателя</div></div>
<div class="cell c1" style="left:368px;top:-11.3px;width:168px;height:21.0px;padding-left:3px;letter-spacing:-0.2px;"><div>Engine Load</div></div>
<div class="cell cc" style="left:537px;top:-11.3px;width:74px;height:21.0px;"><div>%</div></div>
<div class="cell cc" style="left:612px;top:-11.3px;width:193px;height:21.0px;"><div>10 <span class="d">–</span> 15%</div></div>
<div class="hl" style="left:7px;top:9px;width:798px"></div>
<div class="cell c1" style="left:8px;top:9.7px;width:359px;height:20.900000000000006px;padding-left:3px;"><div>Температура охлаждающей жидкости двигателя</div></div>
<div class="cell c1" style="left:368px;top:9.7px;width:168px;height:20.900000000000006px;padding-left:3px;letter-spacing:-0.2px;"><div>Coolant Temp.</div></div>
<div class="cell cc" style="left:537px;top:9.7px;width:74px;height:20.900000000000006px;"><div>°C</div></div>
<div class="cell cc" style="left:612px;top:9.7px;width:193px;height:20.900000000000006px;"><div>≥ 75°C</div></div>
<div class="hl" style="left:7px;top:30px;width:798px"></div>
<div class="cell c1" style="left:8px;top:30.600000000000005px;width:359px;height:20.69999999999999px;padding-left:3px;"><div>Коррекция топливовоздушной смеси 1</div></div>
<div class="cell c1" style="left:368px;top:30.600000000000005px;width:168px;height:20.69999999999999px;padding-left:3px;letter-spacing:-0.28px;"><div>A/F Correction #1</div></div>
<div class="cell cc" style="left:537px;top:30.600000000000005px;width:74px;height:20.69999999999999px;"><div>%</div></div>
<div class="cell cc" style="left:612px;top:30.600000000000005px;width:193px;height:20.69999999999999px;"><div>–10 <span class="d">–</span> +10%</div></div>
<div class="hl" style="left:7px;top:51px;width:798px"></div>
<div class="cell c1" style="left:8px;top:51.3px;width:359px;height:20.30000000000001px;padding-left:3px;"><div>Обучение топливовоздушной смеси 1</div></div>
<div class="cell c1" style="left:368px;top:51.3px;width:168px;height:20.30000000000001px;padding-left:3px;letter-spacing:-0.28px;"><div>A/F Learning #1</div></div>
<div class="cell cc" style="left:537px;top:51.3px;width:74px;height:20.30000000000001px;"><div>%</div></div>
<div class="cell cc" style="left:612px;top:51.3px;width:193px;height:20.30000000000001px;"><div>–15 <span class="d">–</span> +15%</div></div>
<div class="hl" style="left:7px;top:71px;width:798px"></div>
<div class="cell c1" style="left:8px;top:71.60000000000001px;width:359px;height:20.900000000000006px;padding-left:3px;"><div>Абсолютное давление во впускном коллекторе</div></div>
<div class="cell c1" style="left:368px;top:71.60000000000001px;width:168px;height:20.900000000000006px;padding-left:3px;letter-spacing:-0.2px;"><div>Mani. Absolute Pressure</div></div>
<div class="cell cc" style="left:537px;top:71.60000000000001px;width:74px;height:20.900000000000006px;"><div>мм рт. ст.</div></div>
<div class="cell cc" style="left:612px;top:71.60000000000001px;width:193px;height:20.900000000000006px;"><div>200 <span class="d">–</span> 300 мм рт.ст.</div></div>
<div class="hl" style="left:7px;top:92px;width:798px"></div>
<div class="cell c1" style="left:8px;top:92.50000000000001px;width:359px;height:54.0px;padding-left:3px;"><div>Сигнал оборотов двигателя</div></div>
<div class="cell c1" style="left:368px;top:92.50000000000001px;width:168px;height:54.0px;padding-left:3px;letter-spacing:-0.2px;"><div>Engine Speed</div></div>
<div class="cell cc" style="left:537px;top:92.50000000000001px;width:74px;height:54.0px;"><div>об/мин</div></div>
<div class="cell cc" style="left:612px;top:92.50000000000001px;width:193px;height:54.0px;"><div>600 <span class="d">–</span> 800 об/мин<br>(В соответствии с показани-<br>ями тахометра)</div></div>
<div class="hl" style="left:7px;top:146px;width:798px"></div>
<div class="cell c1" style="left:8px;top:146.5px;width:359px;height:37.0px;padding-left:3px;"><div>Измеренная скорость движения автомобиля</div></div>
<div class="cell c1" style="left:368px;top:146.5px;width:168px;height:37.0px;padding-left:3px;letter-spacing:-0.2px;"><div>Vehicle Speed</div></div>
<div class="cell cc" style="left:537px;top:146.5px;width:74px;height:37.0px;"><div>км/ч</div></div>
<div class="cell cc" style="left:612px;top:146.5px;width:193px;height:37.0px;"><div>0 км/ч (При остановленном<br>автомобиле)</div></div>
<div class="hl" style="left:7px;top:183px;width:798px"></div>
<div class="cell c1" style="left:8px;top:183.5px;width:359px;height:20.69999999999999px;padding-left:3px;"><div>Сигнал угла опережения зажигания</div></div>
<div class="cell c1" style="left:368px;top:183.5px;width:168px;height:20.69999999999999px;padding-left:3px;letter-spacing:-0.2px;"><div>Ignition Timing</div></div>
<div class="cell cc" style="left:537px;top:183.5px;width:74px;height:20.69999999999999px;"><div>градус</div></div>
<div class="cell cc" style="left:612px;top:183.5px;width:193px;height:20.69999999999999px;"><div>11 <span class="d">–</span> 15 градусов</div></div>
<div class="hl" style="left:7px;top:204px;width:798px"></div>
<div class="cell c1" style="left:8px;top:204.2px;width:359px;height:38.69999999999999px;padding-left:3px;"><div>Сигнал температуры впускаемого воздуха</div></div>
<div class="cell c1" style="left:368px;top:204.2px;width:168px;height:38.69999999999999px;padding-left:3px;letter-spacing:-0.2px;"><div>Intake Air Temp.</div></div>
<div class="cell cc" style="left:537px;top:204.2px;width:74px;height:38.69999999999999px;"><div>°C</div></div>
<div class="cell cc" style="left:612px;top:204.2px;width:193px;height:38.69999999999999px;"><div>(Температура наружного<br>воздуха)</div></div>
<div class="hl" style="left:7px;top:242px;width:798px"></div>
<div class="cell c1" style="left:8px;top:242.89999999999998px;width:359px;height:19.80000000000001px;padding-left:3px;"><div>Объем впускаемого воздуха</div></div>
<div class="cell c1" style="left:368px;top:242.89999999999998px;width:168px;height:19.80000000000001px;padding-left:3px;letter-spacing:-0.2px;"><div>Mass Air Flow</div></div>
<div class="cell cc" style="left:537px;top:242.89999999999998px;width:74px;height:19.80000000000001px;"><div>г/с</div></div>
<div class="cell cc" style="left:612px;top:242.89999999999998px;width:193px;height:19.80000000000001px;"><div>2 <span class="d">–</span> 4 г/с</div></div>
<div class="hl" style="left:7px;top:262px;width:798px"></div>
<div class="cell c1" style="left:8px;top:262.7px;width:359px;height:20.80000000000001px;padding-left:3px;"><div>Сигнал угла открытия дроссельной заслонки</div></div>
<div class="cell c1" style="left:368px;top:262.7px;width:168px;height:20.80000000000001px;padding-left:3px;letter-spacing:-0.2px;"><div>Throttle Opening Angle</div></div>
<div class="cell cc" style="left:537px;top:262.7px;width:74px;height:20.80000000000001px;"><div>%</div></div>
<div class="cell cc" style="left:612px;top:262.7px;width:193px;height:20.80000000000001px;"><div>1 <span class="d">–</span> 3%</div></div>
<div class="hl" style="left:7px;top:283px;width:798px"></div>
<div class="cell c1" style="left:8px;top:283.5px;width:359px;height:20.399999999999977px;padding-left:3px;"><div>Напряжение заднего датчика кислорода</div></div>
<div class="cell c1" style="left:368px;top:283.5px;width:168px;height:20.399999999999977px;padding-left:3px;letter-spacing:-0.2px;"><div>Rear O2 Sensor</div></div>
<div class="cell cc" style="left:537px;top:283.5px;width:74px;height:20.399999999999977px;"><div>В</div></div>
<div class="cell cc" style="left:612px;top:283.5px;width:193px;height:20.399999999999977px;"><div>0,6 <span class="d">–</span> 0,85 В</div></div>
<div class="hl" style="left:7px;top:303px;width:798px"></div>
<div class="cell c1" style="left:8px;top:303.9px;width:359px;height:20.80000000000001px;padding-left:3px;"><div>Напряжение аккумулятора</div></div>
<div class="cell c1" style="left:368px;top:303.9px;width:168px;height:20.80000000000001px;padding-left:3px;letter-spacing:-0.2px;"><div>Battery Voltage</div></div>
<div class="cell cc" style="left:537px;top:303.9px;width:74px;height:20.80000000000001px;"><div>В</div></div>
<div class="cell cc" style="left:612px;top:303.9px;width:193px;height:20.80000000000001px;"><div>8 <span class="d">–</span> 15 В</div></div>
<div class="hl" style="left:7px;top:324px;width:798px"></div>
<div class="cell c1" style="left:8px;top:324.7px;width:359px;height:20.80000000000001px;padding-left:3px;"><div>Напряжение датчика массового расхода воздуха</div></div>
<div class="cell c1" style="left:368px;top:324.7px;width:168px;height:20.80000000000001px;padding-left:3px;letter-spacing:-0.2px;"><div>Air Flow Sensor Voltage</div></div>
<div class="cell cc" style="left:537px;top:324.7px;width:74px;height:20.80000000000001px;"><div>В</div></div>
<div class="cell cc" style="left:612px;top:324.7px;width:193px;height:20.80000000000001px;"><div>1,1 <span class="d">–</span> 1,2 В</div></div>
<div class="hl" style="left:7px;top:345px;width:798px"></div>
<div class="cell c1" style="left:8px;top:345.5px;width:359px;height:20.69999999999999px;padding-left:3px;"><div>Длительность импульса впрыска 1</div></div>
<div class="cell c1" style="left:368px;top:345.5px;width:168px;height:20.69999999999999px;padding-left:3px;letter-spacing:-0.2px;"><div>Fuel Injection #1 Pulse</div></div>
<div class="cell cc" style="left:537px;top:345.5px;width:74px;height:20.69999999999999px;"><div>мс</div></div>
<div class="cell cc" style="left:612px;top:345.5px;width:193px;height:20.69999999999999px;"><div>2,56 <span class="d">–</span> 3,3 мс</div></div>
<div class="hl" style="left:7px;top:366px;width:798px"></div>
<div class="cell c1" style="left:8px;top:366.2px;width:359px;height:20px;padding-left:3px;"><div>Сигнал датчика атмосферного давления</div></div>
<div class="cell c1" style="left:368px;top:366.2px;width:168px;height:20px;padding-left:3px;letter-spacing:-0.2px;"><div>Atmosphere Pressure</div></div>
<div class="cell cc" style="left:537px;top:366.2px;width:74px;height:20px;"><div>мм рт. ст.</div></div>
<div class="cell cc" style="left:612px;top:366.2px;width:193px;height:20px;"><div>(Атмосферное давление)</div></div>
<div class="hl" style="left:7px;top:386px;width:798px"></div>
<div class="cell c1" style="left:8px;top:386.2px;width:359px;height:54.39999999999998px;padding-left:3px;"><div>Относительное давление во впускном коллекторе</div></div>
<div class="cell c1" style="left:368px;top:386.2px;width:168px;height:54.39999999999998px;padding-left:3px;letter-spacing:-0.2px;"><div>Mani. Relative Pressure</div></div>
<div class="cell cc" style="left:537px;top:386.2px;width:74px;height:54.39999999999998px;"><div>мм рт. ст.</div></div>
<div class="cell cc" style="left:612px;top:386.2px;width:193px;height:54.39999999999998px;"><div>(Абсолютное давление впус-<br>каемого воздуха – атмос-<br>ферное давление)</div></div>
<div class="hl" style="left:7px;top:440px;width:798px"></div>
<div class="cell c1" style="left:8px;top:440.59999999999997px;width:359px;height:20.800000000000068px;padding-left:3px;"><div>Значение обучения системы зажигания</div></div>
<div class="cell c1" style="left:368px;top:440.59999999999997px;width:168px;height:20.800000000000068px;padding-left:3px;letter-spacing:-0.2px;"><div>Learned Ignition Timinig</div></div>
<div class="cell cc" style="left:537px;top:440.59999999999997px;width:74px;height:20.800000000000068px;"><div>градус</div></div>
<div class="cell cc" style="left:612px;top:440.59999999999997px;width:193px;height:20.800000000000068px;"><div>0,0 градусов</div></div>
<div class="hl" style="left:7px;top:461px;width:798px"></div>
<div class="cell c1" style="left:8px;top:461.40000000000003px;width:359px;height:20.09999999999991px;padding-left:3px;"><div>Сигнал датчика угла нажатия педали акселератора</div></div>
<div class="cell c1" style="left:368px;top:461.40000000000003px;width:168px;height:20.09999999999991px;padding-left:3px;letter-spacing:-0.2px;"><div>Accel. Opening Angle</div></div>
<div class="cell cc" style="left:537px;top:461.40000000000003px;width:74px;height:20.09999999999991px;"><div>%</div></div>
<div class="cell cc" style="left:612px;top:461.40000000000003px;width:193px;height:20.09999999999991px;"><div>0,0%</div></div>
<div class="hl" style="left:7px;top:481px;width:798px"></div>
<div class="cell c1" style="left:8px;top:481.49999999999994px;width:359px;height:38.30000000000007px;padding-left:3px;letter-spacing:-0.17px;"><div>Коэффициент заполнения импульсов сигнала управле-<br>ния электромагнитным клапаном продувки адсорбера</div></div>
<div class="cell c1" style="left:368px;top:481.49999999999994px;width:168px;height:38.30000000000007px;padding-left:3px;letter-spacing:-0.2px;"><div>CPC Valve Duty Ratio</div></div>
<div class="cell cc" style="left:537px;top:481.49999999999994px;width:74px;height:38.30000000000007px;"><div>%</div></div>
<div class="cell cc" style="left:612px;top:481.49999999999994px;width:193px;height:38.30000000000007px;"><div>0 <span class="d">–</span> 3%</div></div>
<div class="hl" style="left:7px;top:519px;width:798px"></div>
<div class="cell c1" style="left:8px;top:519.8000000000001px;width:359px;height:20.799999999999955px;padding-left:3px;"><div>Шаги рециркуляции выхлопных газов</div></div>
<div class="cell c1" style="left:368px;top:519.8000000000001px;width:168px;height:20.799999999999955px;padding-left:3px;letter-spacing:-0.2px;"><div>No. of EGR steps</div></div>
<div class="cell cc" style="left:537px;top:519.8000000000001px;width:74px;height:20.799999999999955px;"><div>ШАГ</div></div>
<div class="cell cc" style="left:612px;top:519.8000000000001px;width:193px;height:20.799999999999955px;"><div>0</div></div>
<div class="hl" style="left:7px;top:540px;width:798px"></div>
<div class="cell c1" style="left:8px;top:540.6px;width:359px;height:19.800000000000068px;padding-left:3px;"><div>Величина тока датчика топливовоздушной смеси 1</div></div>
<div class="cell c1" style="left:368px;top:540.6px;width:168px;height:19.800000000000068px;padding-left:3px;letter-spacing:-0.28px;"><div>A/F Sensor #1 Current</div></div>
<div class="cell cc" style="left:537px;top:540.6px;width:74px;height:19.800000000000068px;"><div>мА</div></div>
<div class="cell cc" style="left:612px;top:540.6px;width:193px;height:19.800000000000068px;"><div>–0,2 <span class="d">–</span> 0,2 мА</div></div>
<div class="hl" style="left:7px;top:560px;width:798px"></div>
<div class="cell c1" style="left:8px;top:560.4000000000001px;width:359px;height:38.299999999999955px;padding-left:3px;"><div>Величина сопротивления датчика топливовоздушной<br>смеси 1</div></div>
<div class="cell c1" style="left:368px;top:560.4000000000001px;width:168px;height:38.299999999999955px;padding-left:3px;letter-spacing:-0.28px;"><div>A/F Sensor #1 Resistance</div></div>
<div class="cell cc" style="left:537px;top:560.4000000000001px;width:74px;height:38.299999999999955px;"><div>Ом</div></div>
<div class="cell cc" style="left:612px;top:560.4000000000001px;width:193px;height:38.299999999999955px;"><div>27 <span class="d">–</span> 33 Ом</div></div>
<div class="hl" style="left:7px;top:598px;width:798px"></div>
<div class="cell c1" style="left:8px;top:598.7px;width:359px;height:37.0px;padding-left:3px;"><div>Выходное значение лямбда датчика топливовоздуш-<br>ной смеси 1</div></div>
<div class="cell c1" style="left:368px;top:598.7px;width:168px;height:37.0px;padding-left:3px;letter-spacing:-0.28px;"><div>A/F Sensor #1</div></div>
<div class="cell cc" style="left:537px;top:598.7px;width:74px;height:37.0px;"><div><span class="d">–</span></div></div>
<div class="cell cc" style="left:612px;top:598.7px;width:193px;height:37.0px;"><div>0,85 <span class="d">–</span> 1,05</div></div>
<div class="hl" style="left:7px;top:635px;width:798px"></div>
<div class="vl" style="left:7px;top:0;height:624px"></div>
<div class="vl" style="left:367px;top:0;height:624px"></div>
<div class="vl" style="left:536px;top:0;height:624px"></div>
<div class="vl" style="left:611px;top:0;height:624px"></div>
<div class="vl" style="left:805px;top:0;height:624px"></div>
<div class="abs" style="left:0;top:1px;width:782px;height:2px;background:rgba(0,0,0,.4)"></div><div class="abs" style="left:0;top:3px;width:782px;height:2px;background:rgba(0,0,0,.2)"></div>
</div>
<div class="abs" style="left:0;top:144px;width:1024px;height:1px;background:#585858"></div>
<div class="abs" style="left:1007px;top:145px;width:17px;height:623px;background:#fff;border-left:1px solid #fafad2;border-right:1px solid #fafad2"></div>
<div class="abs" style="left:1009px;top:146px;width:13px;height:15px;background:#ccccfc;border-bottom:1px solid #8aa0d0"></div>
<svg class="abs" style="left:1009px;top:146px" width="13" height="15"><path d="M2.5 10L6.5 6L10.5 10" fill="none" stroke="#3a5a90" stroke-width="2"/></svg>
<div class="abs" style="left:1009px;top:219px;width:13px;height:10px;background:#ccccfc;border-bottom:1px solid #8aa0d0"></div>
<div class="abs" style="left:1009px;top:766px;width:13px;height:2px;background:#c8ccf8"></div>
<div class="abs" style="left:1023px;top:766px;width:1px;height:2px;background:#c0c0c0"></div>
<div class="abs" style="left:42px;top:149px;width:195px;height:43px;border:1px solid #5e5e5e;border-right:1px solid #5e5e5e;border-bottom:none"></div>
<div class="abs" style="left:43px;top:191px;width:194px;height:1px;background:#111"></div>
<div class="abs" style="left:2px;top:192px;width:41px;height:44px;border:1px solid #5e5e5e;border-right:none"></div>
<div class="abs" style="left:2px;top:192px;width:235px;height:1px;background:#5e5e5e"></div>
<div class="abs" style="left:42px;top:235px;width:1px;height:533px;background:#5e5e5e"></div>
<div class="abs" style="left:236px;top:192px;width:1px;height:576px;background:#5e5e5e"></div>
<div class="abs" style="left:48px;top:163px;font-size:11.7px;font-weight:bold;color:#fff;line-height:14px">Bookmarks</div>
<div class="abs" style="left:219px;top:163px;width:13px;height:13px;border:1px solid #6a6a6a"></div>
<svg class="abs" style="left:219px;top:163px" width="13" height="13"><path d="M8 3.5L4.5 6.5L8 9.5Z" fill="#fff"/></svg>
<svg class="abs" style="left:8px;top:157px" width="22" height="26" viewBox="0 0 22 26"><path d="M1.5 5.5H11.5L15.5 9.5V23.5H1.5Z" fill="#b8b8b8" stroke="#9a9a9a"/><path d="M5.5 1.5H15.5L19.5 5.5V19.5H5.5Z" fill="#c8c8c8" stroke="#a8a8a8"/><path d="M15.5 1.5V5.5H19.5" fill="#e8e8e8" stroke="#a0a0a0"/><path d="M8 8.5H17M8 10.5H17M8 12.5H17M8 14.5H17M8 16.5H17" stroke="#8a8a8a" stroke-width=".8"/></svg>
<svg class="abs" style="left:9px;top:201px" width="20" height="25" viewBox="0 0 20 25"><path d="M1.5 2.5H13.5L18.5 7.5V23.5H1.5Z" fill="#fff" stroke="#6aa8c8"/><rect x="2" y="17" width="16" height="6" fill="#c8c8f4"/><path d="M13.5 2.5V7.5H18.5" fill="#f0f0ff" stroke="#6a8ac8"/><path d="M9 10.5H16M9 12.5H16M9 14.5H16" stroke="#70c0b8" stroke-width="1"/><path d="M3.5 1.5H9.5V16L6.5 13L3.5 16Z" fill="#90d0c8" stroke="#1a58a0"/><rect x="4" y="10" width="5" height="4" fill="#5080c0"/></svg>
<svg class="abs" style="left:48px;top:198px" width="19" height="18" viewBox="0 0 19 18"><g transform="translate(9 9)"><path d="M7.49 -1.29L7.49 1.29L5.30 1.81L5.35 1.65L6.82 3.36L5.30 5.44L3.22 4.58L3.36 4.48L3.54 6.73L1.09 7.52L-0.09 5.60L0.09 5.60L-1.09 7.52L-3.54 6.73L-3.36 4.48L-3.22 4.58L-5.30 5.44L-6.82 3.36L-5.35 1.65L-5.30 1.81L-7.49 1.29L-7.49 -1.29L-5.30 -1.81L-5.35 -1.65L-6.82 -3.36L-5.30 -5.44L-3.22 -4.58L-3.36 -4.48L-3.54 -6.73L-1.09 -7.52L0.09 -5.60L-0.09 -5.60L1.09 -7.52L3.54 -6.73L3.36 -4.48L3.22 -4.58L5.30 -5.44L6.82 -3.36L5.35 -1.65L5.30 -1.81Z" fill="#b4b4b4" stroke="#8a8a8a" stroke-width=".5"/><circle r="3.2" fill="#7a7a7a"/><circle r="2" fill="#a8a8a8"/></g></svg>
<svg class="abs" style="left:69px;top:205px" width="6" height="4"><path d="M0 0H5L2.5 3Z" fill="#fff"/></svg>
<svg class="abs" style="left:205px;top:197px" width="24" height="19" viewBox="0 0 24 19"><path d="M1.5 1.5H13.5V17.5H1.5Z" fill="#fff" stroke="#2a7ad0"/><rect x="2" y="12" width="11" height="5" fill="#c8c8f4"/><path d="M6.5 4.5H12M6.5 6.5H12M6.5 8.5H12M3 10.5H12" stroke="#70c0b8" stroke-width="1"/><path d="M3 1H6V8L4.5 6.5L3 8Z" fill="#1a58a0"/><path d="M15 8H18V5.5L22 9.5L18 13.5V11H15Z" fill="#3a90d8"/></svg>
<div class="abs" style="left:46px;top:221px;width:187px;height:547px;background:#fff;overflow:hidden" id="tree">
<div class="abs" style="left:28px;top:0px;width:1px;height:547px;background:#c0c0c0"></div>
<div class="abs" style="left:60px;top:0px;width:1px;height:27px;background:#c0c0c0"></div>
<div class="abs" style="left:44px;top:72px;width:1px;height:30px;background:#c0c0c0"></div>
<div class="abs" style="left:60px;top:110px;width:1px;height:437px;background:#c0c0c0"></div>
<div class="abs" style="left:60px;top:-12px;width:9px;height:1px;background:#c0c0c0"></div>
<svg class="abs" style="left:69px;top:-20px" width="13" height="16" viewBox="0 0 13 16"><rect x=".5" y="1.5" width="12" height="14" fill="#fff" stroke="#2a80d0"/><rect x="1" y="8" width="11" height="5" fill="#d8f8f8"/><rect x="1" y="13" width="11" height="2" fill="#c8c8f0"/><path d="M7 4.5H11M7 6.5H11M3 9.5H11M3 11.5H11" stroke="#70b8b0" stroke-width="1"/><path d="M3 0H6V8L4.5 6.5L3 8Z" fill="#1a58a0"/></svg>
<div class="tree" style="left:88.5px;top:-18px">7. РЕЖИМ<br>$07</div>
<div class="abs" style="left:60px;top:26px;width:9px;height:1px;background:#c0c0c0"></div>
<svg class="abs" style="left:69px;top:18px" width="13" height="16" viewBox="0 0 13 16"><rect x=".5" y="1.5" width="12" height="14" fill="#fff" stroke="#2a80d0"/><rect x="1" y="8" width="11" height="5" fill="#d8f8f8"/><rect x="1" y="13" width="11" height="2" fill="#c8c8f0"/><path d="M7 4.5H11M7 6.5H11M3 9.5H11M3 11.5H11" stroke="#70b8b0" stroke-width="1"/><path d="M3 0H6V8L4.5 6.5L3 8Z" fill="#1a58a0"/></svg>
<div class="tree" style="left:88.5px;top:20px"><span style="letter-spacing:-0.06px">8. РЕЖИМ</span><br>$09</div>
<div class="abs" style="left:23px;top:59px;width:9px;height:9px;border:1px solid #888;background:#fff"></div>
<div class="abs" style="left:25px;top:63px;width:5px;height:1px;background:#000"></div>
<div class="abs" style="left:32px;top:64px;width:5px;height:1px;background:#c0c0c0"></div>
<svg class="abs" style="left:37px;top:56px" width="13" height="16" viewBox="0 0 13 16"><rect x=".5" y="1.5" width="12" height="14" fill="#fff" stroke="#2a80d0"/><rect x="1" y="8" width="11" height="5" fill="#d8f8f8"/><rect x="1" y="13" width="11" height="2" fill="#c8c8f0"/><path d="M7 4.5H11M7 6.5H11M3 9.5H11M3 11.5H11" stroke="#70b8b0" stroke-width="1"/><path d="M3 0H6V8L4.5 6.5L3 8Z" fill="#1a58a0"/></svg>
<div class="tree" style="left:56.5px;top:58px"><span style="letter-spacing:0.39px">9. Subaru Select</span><br><span style="letter-spacing:0.34px">Monitor</span></div>
<div class="abs" style="left:39px;top:97px;width:9px;height:9px;border:1px solid #888;background:#fff"></div>
<div class="abs" style="left:41px;top:101px;width:5px;height:1px;background:#000"></div>
<div class="abs" style="left:48px;top:102px;width:5px;height:1px;background:#c0c0c0"></div>
<svg class="abs" style="left:53px;top:94px" width="13" height="16" viewBox="0 0 13 16"><rect x=".5" y="1.5" width="12" height="14" fill="#fff" stroke="#2a80d0"/><rect x="1" y="8" width="11" height="5" fill="#d8f8f8"/><rect x="1" y="13" width="11" height="2" fill="#c8c8f0"/><path d="M7 4.5H11M7 6.5H11M3 9.5H11M3 11.5H11" stroke="#70b8b0" stroke-width="1"/><path d="M3 0H6V8L4.5 6.5L3 8Z" fill="#1a58a0"/></svg>
<div class="tree" style="left:72.5px;top:96px"><span style="letter-spacing:-0.02px">A: ПОРЯДОК</span><br>РАБОТЫ</div>
<div class="abs" style="left:60px;top:140px;width:9px;height:1px;background:#c0c0c0"></div>
<svg class="abs" style="left:69px;top:132px" width="13" height="16" viewBox="0 0 13 16"><rect x=".5" y="1.5" width="12" height="14" fill="#fff" stroke="#2a80d0"/><rect x="1" y="8" width="11" height="5" fill="#d8f8f8"/><rect x="1" y="13" width="11" height="2" fill="#c8c8f0"/><path d="M7 4.5H11M7 6.5H11M3 9.5H11M3 11.5H11" stroke="#70b8b0" stroke-width="1"/><path d="M3 0H6V8L4.5 6.5L3 8Z" fill="#1a58a0"/></svg>
<div class="tree" style="left:88.5px;top:134px"><span style="letter-spacing:-0.09px">1. ПОРЯДОК</span><br><span style="letter-spacing:-0.32px">ИСПОЛЬЗОВ</span><br>АНИЯ<br><span style="letter-spacing:-0.62px">SUBARU</span><br><span style="letter-spacing:-0.61px">SELECT</span></div>
<div class="abs" style="left:60px;top:226px;width:9px;height:1px;background:#c0c0c0"></div>
<svg class="abs" style="left:69px;top:218px" width="13" height="16" viewBox="0 0 13 16"><rect x=".5" y="1.5" width="12" height="14" fill="#fff" stroke="#2a80d0"/><rect x="1" y="8" width="11" height="5" fill="#d8f8f8"/><rect x="1" y="13" width="11" height="2" fill="#c8c8f0"/><path d="M7 4.5H11M7 6.5H11M3 9.5H11M3 11.5H11" stroke="#70b8b0" stroke-width="1"/><path d="M3 0H6V8L4.5 6.5L3 8Z" fill="#1a58a0"/></svg>
<div class="tree" style="left:88.5px;top:220px">2.<br><span style="letter-spacing:-0.47px">СЧИТЫВАНИЕ</span><br>КОДОВ<br><span style="letter-spacing:-0.15px">ДИАГНОСТИК</span><br>И</div>
<div class="abs" style="left:60px;top:312px;width:9px;height:1px;background:#c0c0c0"></div>
<svg class="abs" style="left:69px;top:304px" width="13" height="16" viewBox="0 0 13 16"><rect x=".5" y="1.5" width="12" height="14" fill="#fff" stroke="#2a80d0"/><rect x="1" y="8" width="11" height="5" fill="#d8f8f8"/><rect x="1" y="13" width="11" height="2" fill="#c8c8f0"/><path d="M7 4.5H11M7 6.5H11M3 9.5H11M3 11.5H11" stroke="#70b8b0" stroke-width="1"/><path d="M3 0H6V8L4.5 6.5L3 8Z" fill="#1a58a0"/></svg>
<div class="tree" style="left:88.5px;top:306px">3.<br><span style="letter-spacing:-0.47px">СЧИТЫВАНИЕ</span><br>КОДОВ<br><span style="letter-spacing:-0.15px">ДИАГНОСТИК</span><br>И</div>
<div class="abs" style="left:60px;top:398px;width:9px;height:1px;background:#c0c0c0"></div>
<svg class="abs" style="left:69px;top:390px" width="13" height="16" viewBox="0 0 13 16"><rect x=".5" y="1.5" width="12" height="14" fill="#c8c8c8" stroke="#8a8a8a"/><path d="M7 4.5H11M7 6.5H11M3 9.5H11M3 11.5H11" stroke="#8a8a8a" stroke-width="1"/><path d="M3 0H6V8L4.5 6.5L3 8Z" fill="#707070"/></svg>
<div class="abs" style="left:88px;top:390px;width:82px;height:82px;background:#9cc9cb;border:1px dotted #333"></div>
<div class="tree" style="left:88.5px;top:392px">4.<br><span style="letter-spacing:-0.47px">СЧИТЫВАНИЕ</span><br><span style="letter-spacing:-0.32px">ТЕКУЩИХ</span><br><span style="letter-spacing:-0.38px">ДАННЫХ</span><br><span style="letter-spacing:0.17px">ДВИГАТЕЛЯ</span></div>
<div class="abs" style="left:60px;top:484px;width:9px;height:1px;background:#c0c0c0"></div>
<svg class="abs" style="left:69px;top:476px" width="13" height="16" viewBox="0 0 13 16"><rect x=".5" y="1.5" width="12" height="14" fill="#fff" stroke="#2a80d0"/><rect x="1" y="8" width="11" height="5" fill="#d8f8f8"/><rect x="1" y="13" width="11" height="2" fill="#c8c8f0"/><path d="M7 4.5H11M7 6.5H11M3 9.5H11M3 11.5H11" stroke="#70b8b0" stroke-width="1"/><path d="M3 0H6V8L4.5 6.5L3 8Z" fill="#1a58a0"/></svg>
<div class="tree" style="left:88.5px;top:478px">5.<br><span style="letter-spacing:-0.47px">СЧИТЫВАНИЕ</span><br><span style="letter-spacing:-0.32px">ТЕКУЩИХ</span><br><span style="letter-spacing:-0.38px">ДАННЫХ</span><br><span style="letter-spacing:0.17px">ДВИГАТЕЛЯ</span></div>
<div class="abs" style="left:170px;top:0;width:1px;height:547px;background:#fbfbd8"></div>
<div class="abs" style="left:172px;top:1px;width:13px;height:16px;background:#c8ccf8;border-bottom:1px solid #98a8d8"></div>
<svg class="abs" style="left:172px;top:1px" width="13" height="16"><path d="M3 10L6.5 6.5L10 10" fill="none" stroke="#2a4a80" stroke-width="2"/></svg>
<div class="abs" style="left:172px;top:70px;width:13px;height:7px;background:#c8ccf8;border-bottom:1px solid #98a8d8"></div>
</div>
<div class="abs" style="left:238px;top:447px;width:1px;height:1px;background:#888"></div><div class="abs" style="left:240px;top:447px;width:1px;height:1px;background:#888"></div>
<div class="abs" style="left:238px;top:450px;width:1px;height:1px;background:#888"></div><div class="abs" style="left:240px;top:450px;width:1px;height:1px;background:#888"></div>
<div class="abs" style="left:238px;top:453px;width:1px;height:1px;background:#888"></div><div class="abs" style="left:240px;top:453px;width:1px;height:1px;background:#888"></div>
<div class="abs" style="left:238px;top:456px;width:1px;height:1px;background:#888"></div><div class="abs" style="left:240px;top:456px;width:1px;height:1px;background:#888"></div>
<div class="abs" style="left:238px;top:459px;width:1px;height:1px;background:#888"></div><div class="abs" style="left:240px;top:459px;width:1px;height:1px;background:#888"></div>
<div class="abs" style="left:238px;top:462px;width:1px;height:1px;background:#888"></div><div class="abs" style="left:240px;top:462px;width:1px;height:1px;background:#888"></div>
<div class="abs" style="left:238px;top:465px;width:1px;height:1px;background:#888"></div><div class="abs" style="left:240px;top:465px;width:1px;height:1px;background:#888"></div>
<div class="abs" style="left:238px;top:468px;width:1px;height:1px;background:#888"></div><div class="abs" style="left:240px;top:468px;width:1px;height:1px;background:#888"></div>
<div class="abs" style="left:238px;top:471px;width:1px;height:1px;background:#888"></div><div class="abs" style="left:240px;top:471px;width:1px;height:1px;background:#888"></div>
<div class="abs" style="left:238px;top:474px;width:1px;height:1px;background:#888"></div><div class="abs" style="left:240px;top:474px;width:1px;height:1px;background:#888"></div>
<div class="abs" style="left:238px;top:477px;width:1px;height:1px;background:#888"></div><div class="abs" style="left:240px;top:477px;width:1px;height:1px;background:#888"></div>
<div class="abs" style="left:238px;top:480px;width:1px;height:1px;background:#888"></div><div class="abs" style="left:240px;top:480px;width:1px;height:1px;background:#888"></div>
<div class="abs" style="left:238px;top:483px;width:1px;height:1px;background:#888"></div><div class="abs" style="left:240px;top:483px;width:1px;height:1px;background:#888"></div>
<div class="abs" style="left:238px;top:486px;width:1px;height:1px;background:#888"></div><div class="abs" style="left:240px;top:486px;width:1px;height:1px;background:#888"></div>
<div class="abs" style="left:238px;top:489px;width:1px;height:1px;background:#888"></div><div class="abs" style="left:240px;top:489px;width:1px;height:1px;background:#888"></div>
<div class="abs" style="left:238px;top:492px;width:1px;height:1px;background:#888"></div><div class="abs" style="left:240px;top:492px;width:1px;height:1px;background:#888"></div>
<div class="abs" style="left:238px;top:495px;width:1px;height:1px;background:#888"></div><div class="abs" style="left:240px;top:495px;width:1px;height:1px;background:#888"></div>
<svg class="abs" style="left:6px;top:722px" width="28" height="22" viewBox="0 0 28 22"><path d="M3 2.5H16Q17.5 2.5 17.5 4V10Q17.5 11.5 16 11.5H9L6.5 15.5L7 11.5H3Q1.5 11.5 1.5 10V4Q1.5 2.5 3 2.5Z" fill="#e0a828" stroke="#c07818" stroke-width=".8"/><rect x="3" y="3.5" width="13" height="2.5" fill="#e8e048"/><path d="M12 6.5H25Q26.5 6.5 26.5 8V14Q26.5 15.5 25 15.5H18L15 20L15.5 15.5H12Q10.5 15.5 10.5 14V8Q10.5 6.5 12 6.5Z" fill="#e8b030" stroke="#c07818" stroke-width=".8"/><rect x="12" y="7.5" width="13" height="3" fill="#e0e040"/><path d="M13.5 11.5H23.5M13.5 13.5H23.5" stroke="#a06810" stroke-width="1"/></svg>
<svg class="abs" style="left:18px;top:762px" width="14" height="6" viewBox="0 0 14 6"><path d="M2 6Q7 -1 12 6" fill="none" stroke="#a8a8a8" stroke-width="1.6"/></svg></body></html>
